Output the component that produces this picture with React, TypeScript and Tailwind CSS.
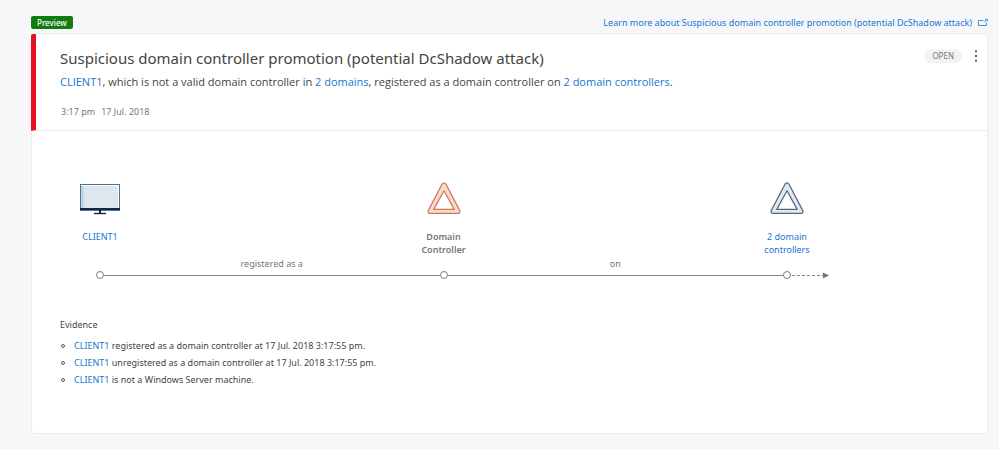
import React from "react";

const link = "text-[#1478d4] hover:underline";

function Triangle({ stroke, fill }: { stroke: string; fill: string }) {
  return (
    <svg width="34" height="34" viewBox="0 0 34 34" fill={fill} stroke={stroke} strokeWidth="1.2" strokeLinejoin="round" aria-hidden="true">
      <path d="M15 2.2Q17 -.4 19 2.2L32.8 28.6Q33.6 31.4 30.8 31.4H3.2Q.4 31.4 1.2 28.6Z" />
      <path d="M17 8.8 27.2 27.4H6.8Z" fill="#fff" />
    </svg>
  );
}

function Monitor() {
  return (
    <svg width="40" height="34" viewBox="0 0 40 34" aria-hidden="true">
      <rect x=".5" y="2.5" width="39" height="26" fill="#dce8ee" stroke="#586b88" />
      <path d="M2.5 3v24" stroke="#a9d5ea" strokeWidth="2" />
      <path d="M1 3.5H38.5V27" fill="none" stroke="#fff" />
      <path d="M0 27h40M20 27v4" fill="none" stroke="#0f2748" strokeWidth="2" />
      <path d="M14 31.5h12" stroke="#0f2748" strokeWidth="1.4" />
    </svg>
  );
}

function Dot() {
  return <span className="size-2 shrink-0 rounded-full border border-[#7d7d7d] bg-white" />;
}

function Segment({ label }: { label: string }) {
  return (
    <div className="flex flex-1 flex-col items-center">
      <span className="text-[9px] leading-4 text-[#777]">{label}</span>
      <span className="mt-[3px] mb-[3px] h-px w-full bg-[#858585]" />
    </div>
  );
}

function Entity({ icon, children }: { icon: React.ReactNode; children: React.ReactNode }) {
  return (
    <div className="flex w-20 flex-col items-center text-center text-[9px] leading-[13px]">
      {icon}
      <div className="mt-[14px] w-14">{children}</div>
    </div>
  );
}

const evidence = [
  "registered as a domain controller at 17 Jul. 2018 3:17:55 pm.",
  "unregistered as a domain controller at 17 Jul. 2018 3:17:55 pm.",
  "is not a Windows Server machine.",
];

export default function App() {
  return (
    <main className="min-h-screen bg-[#f7f7fa] pt-4 pr-[11px] pb-4 pl-[31px] font-['Noto_Sans','Open_Sans',sans-serif] text-[#444]">
      <div className="flex h-[17px] items-start justify-between">
        <span className="rounded-xs bg-[#107c10] px-[6px] text-[8px] leading-[13px] font-medium text-white">Preview</span>
        <a href="#learn" className={`${link} flex items-center gap-[6px] text-[9px] leading-[13px]`}>
          Learn more about Suspicious domain controller promotion (potential DcShadow attack)
          <svg width="10" height="9" viewBox="0 0 10 9" fill="none" stroke="currentColor" aria-hidden="true">
            <path d="M5.5 2.5H.5v5h8V4.5M6 4.5 9 1.5M7 1.5h2.3V3.5" strokeWidth=".8" />
          </svg>
        </a>
      </div>

      <article className="rounded-sm border border-[#ebebeb] bg-white">
        <header className="-ml-px flex items-start rounded-tl-xs border-b border-l-[5px] border-b-[#ebebeb] border-l-[#e81123] pt-3 pr-[5px] pb-[10px] pl-6">
          <div className="flex-1">
            <h1 className="text-[15px] leading-6">Suspicious domain controller promotion (potential DcShadow attack)</h1>
            <p className="font-['Open_Sans','Noto_Sans',sans-serif] text-[11px] leading-6">
              <a href="#client" className={link}>CLIENT1</a>, which is not a valid domain controller in{" "}
              <a href="#domains" className={link}>2 domains</a>, registered as a domain controller on{" "}
              <a href="#controllers" className={link}>2 domain controllers</a>.
            </p>
            <p className="mt-[10px] flex gap-[6px] pl-px text-[9px] leading-4 text-[#777]">
              <time>3:17 pm</time>
              <time>17 Jul. 2018</time>
            </p>
          </div>
          <span className="mt-[3px] rounded-full bg-[#f2f2f2] px-2 text-[8px] leading-[14px] text-[#777]">OPEN</span>
          <button type="button" aria-label="More actions" className="mt-1 ml-2 flex h-3 w-3 items-center justify-center">
            <svg width="4" height="12" viewBox="0 0 4 12" fill="#333" aria-hidden="true">
              <circle cx="2" cy="1.2" r="1" /><circle cx="2" cy="6" r="1" /><circle cx="2" cy="10.8" r="1" />
            </svg>
          </button>
        </header>

        <section className="pt-[51px] pr-40 pl-7">
          <div className="flex justify-between">
            <Entity icon={<Monitor />}><a href="#client" className={link}>CLIENT1</a></Entity>
            <Entity icon={<Triangle stroke="#d0755f" fill="#f8dcc8" />}><span className="font-semibold text-[#777]">Domain Controller</span></Entity>
            <Entity icon={<Triangle stroke="#52667f" fill="#dfeaf0" />}><a href="#controllers" className={link}>2 domain controllers</a></Entity>
          </div>
          <div className="-mr-[2px] flex items-end pl-9">
            <Dot />
            <Segment label="registered as a" />
            <Dot />
            <Segment label="on" />
            <Dot />
            <svg width="38" height="8" viewBox="0 0 38 8" aria-hidden="true">
              <path d="M1 4.5h31" stroke="#858585" strokeDasharray="3 2" />
              <path d="M32 1.5 38 4.5 32 7.5Z" fill="#777" />
            </svg>
          </div>
        </section>

        <section className="px-7 pt-[38px] pb-[45px] text-[9px]">
          <h2 className="leading-4">Evidence</h2>
          <ul className="mt-1 leading-[17px]">
            {evidence.map((text) => (
              <li key={text} className="flex items-center gap-2">
                <span className="mx-px size-1 rounded-full border border-[#555]" />
                <span><a href="#client" className={link}>CLIENT1</a> {text}</span>
              </li>
            ))}
          </ul>
        </section>
      </article>
    </main>
  );
}
